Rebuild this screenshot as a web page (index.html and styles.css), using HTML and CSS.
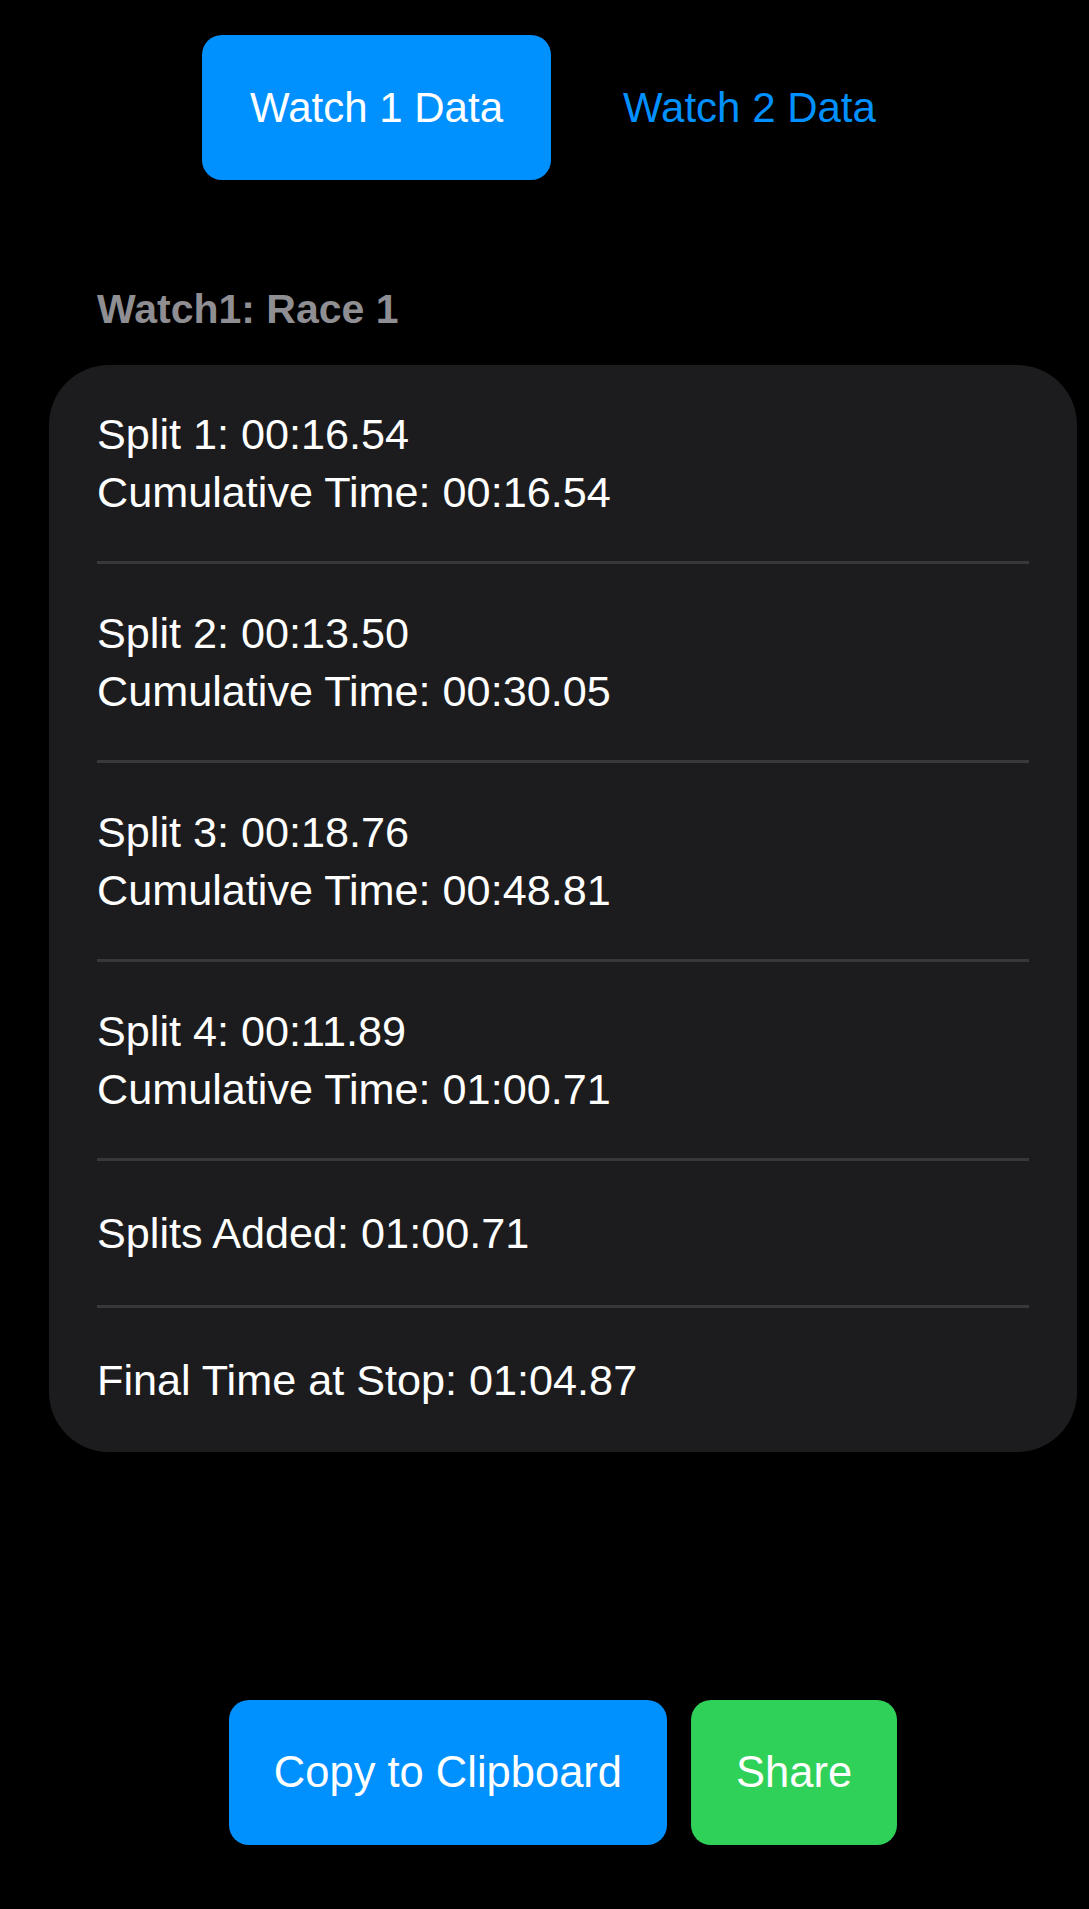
FILE: index.html
```html
<!DOCTYPE html>
<html lang="en">
<head>
  <meta charset="UTF-8">
  <meta name="viewport" content="width=device-width, initial-scale=1.0">
  <title>Race Results</title>
  <link rel="stylesheet" href="styles.css">
</head>
<body>
  <div class="screen">
    <div class="tabs">
      <button class="tab active">Watch 1 Data</button>
      <button class="tab">Watch 2 Data</button>
    </div>

    <h2 class="race-title">Watch1: Race 1</h2>

    <ul class="split-list">
      <li class="split double">
        <span>Split 1: 00:16.54</span>
        <span>Cumulative Time: 00:16.54</span>
      </li>
      <li class="split double">
        <span>Split 2: 00:13.50</span>
        <span>Cumulative Time: 00:30.05</span>
      </li>
      <li class="split double">
        <span>Split 3: 00:18.76</span>
        <span>Cumulative Time: 00:48.81</span>
      </li>
      <li class="split double">
        <span>Split 4: 00:11.89</span>
        <span>Cumulative Time: 01:00.71</span>
      </li>
      <li class="split">
        <span>Splits Added: 01:00.71</span>
      </li>
      <li class="split">
        <span>Final Time at Stop: 01:04.87</span>
      </li>
    </ul>

    <div class="actions">
      <button class="action copy">Copy to Clipboard</button>
      <button class="action share">Share</button>
    </div>
  </div>
</body>
</html>
```

FILE: styles.css
```css
body {
  margin: 0;
  padding: 0;
  background: #000;
  color: #fff;
  font-family: 'Liberation Sans', Arial, sans-serif;
}
.screen {
  width: 1028px;
  margin-left: 49px;
  padding-top: 35px;
}
.tabs {
  display: flex;
  justify-content: center;
  gap: 24px;
}
.tab {
  height: 145px;
  padding: 0 48px;
  border: none;
  border-radius: 20px;
  background: transparent;
  color: #0091ff;
  font-family: inherit;
  font-size: 42px;
  cursor: pointer;
}
.tab.active {
  background: #0091ff;
  color: #fff;
}
.race-title {
  margin: 105px 0 32px 48px;
  font-size: 41px;
  line-height: 48px;
  font-weight: 600;
  color: #8e8e93;
}
.split-list {
  list-style: none;
  margin: 0;
  padding: 0 48px;
  background: #1c1c1e;
  border-radius: 60px;
}
.split {
  display: flex;
  flex-direction: column;
  padding: 43px 0;
  font-size: 43.2px;
  line-height: 58px;
  border-bottom: 3px solid #38383a;
}
.split.double {
  padding: 40px 0;
}
.split:last-child {
  border-bottom: none;
}
.actions {
  display: flex;
  justify-content: center;
  gap: 24px;
  margin-top: 248px;
}
.action {
  height: 145px;
  padding: 0 45px;
  border: none;
  border-radius: 20px;
  color: #fff;
  font-family: inherit;
  font-size: 43.5px;
  cursor: pointer;
}
.action.copy {
  background: #0091ff;
}
.action.share {
  background: #30d158;
}
```
